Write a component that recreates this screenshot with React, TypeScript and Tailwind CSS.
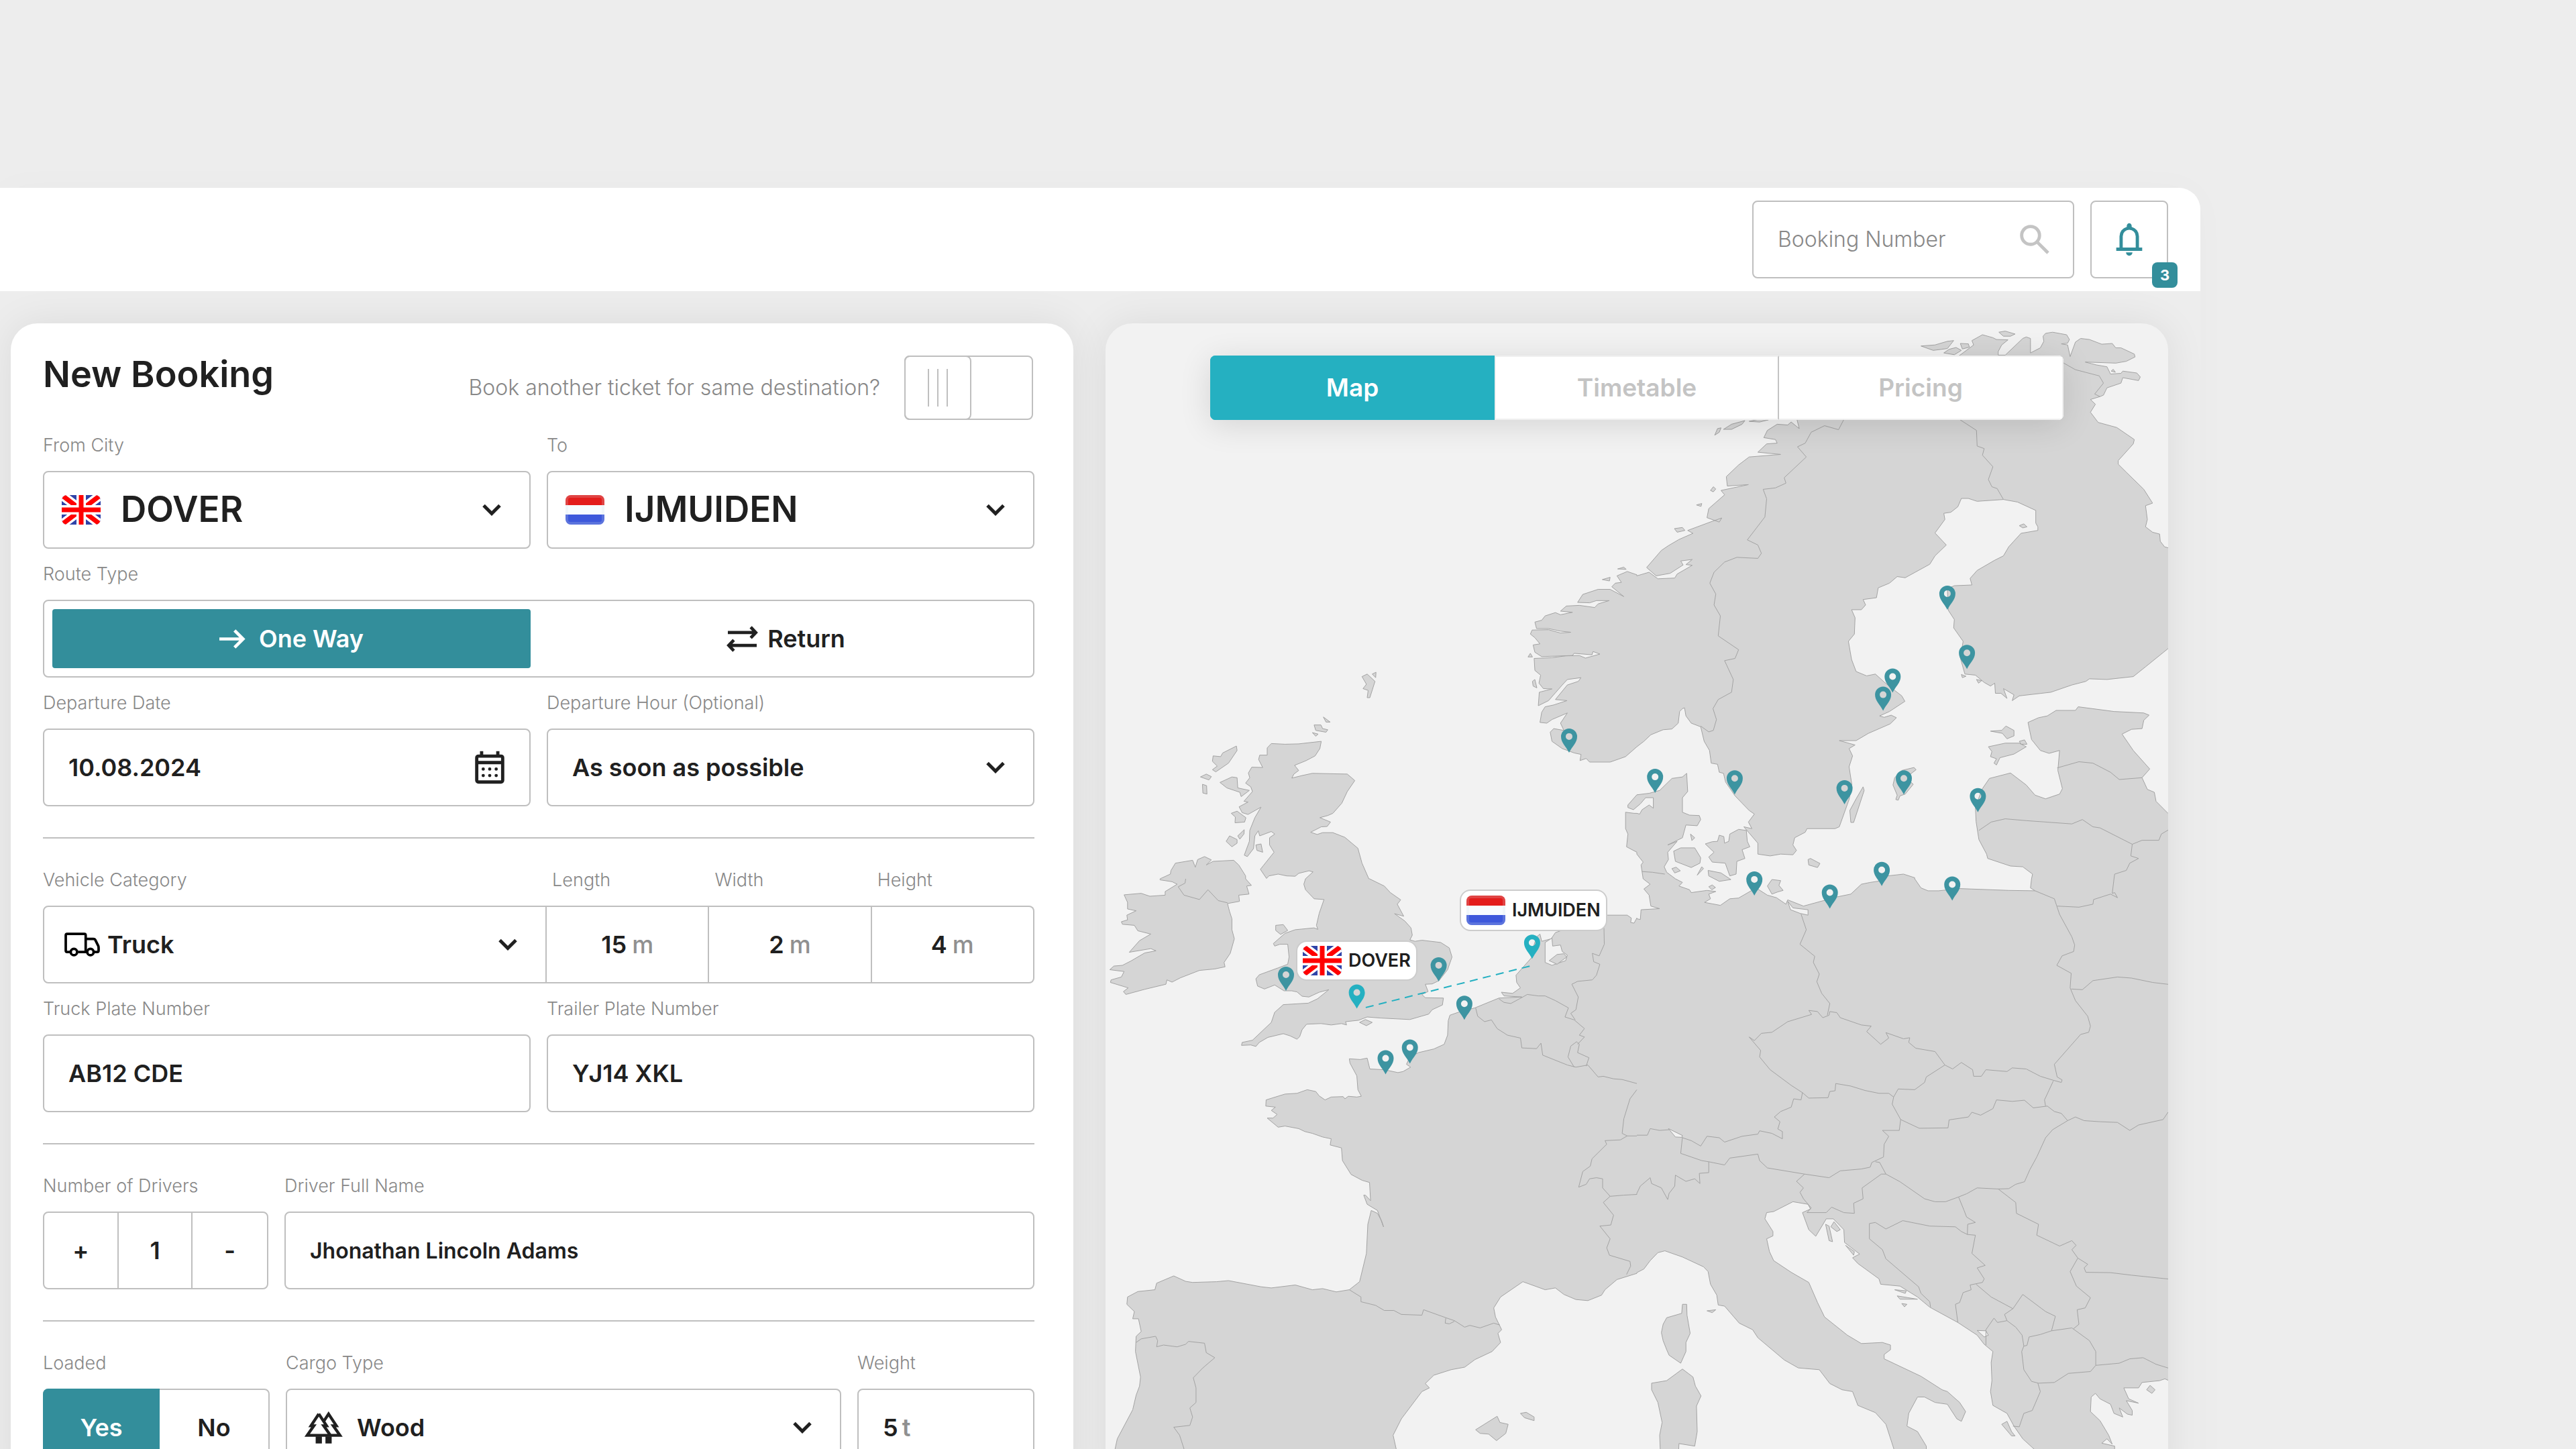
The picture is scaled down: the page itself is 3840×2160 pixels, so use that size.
import { useState } from 'react';
import type { ReactNode } from 'react';
import clsx from 'clsx';

type Quad = 'NW' | 'NE' | 'SW' | 'SE';
type Segment = [Quad, string];

// The coast lines are digitised in four sheets; each sheet has its own origin and scale.
const SHEETS: Record<Quad, { x: number; y: number; sx: number; sy: number }> = {
  NW: { x: -8, y: -22, sx: 0.5102, sy: 0.5421 },
  NE: { x: 792, y: -22, sx: 0.523, sy: 0.5421 },
  SW: { x: -8, y: 828, sx: 0.5102, sy: 0.5421 },
  SE: { x: 792, y: 828, sx: 0.523, sy: 0.5421 },
};

function project(quad: Quad, x: number, y: number) {
  const s = SHEETS[quad];
  return [s.x + x * s.sx, s.y + y * s.sy].map((n) => n.toFixed(1));
}

function toPath(segments: Segment[], close = false) {
  const points = segments.flatMap(([quad, list]) =>
    list.split(' ').map((pair) => {
      const [x, y] = pair.split(',').map(Number);
      return project(quad, x, y).join(' ');
    }),
  );
  return `M${points.join('L')}${close ? 'Z' : ''}`;
}

const LAND: Segment[][] = [
  // Great Britain
  [
    ['NW', '646,1190 642,1210 628,1230 602,1243 568,1256 580,1270 566,1280 560,1291 590,1284 620,1278 722,1280 744,1298 722,1328 706,1360 680,1388 665,1394 642,1400 673,1412 663,1424 646,1425 615,1440 634,1446 650,1441 680,1441 715,1454 753,1484 765,1525 785,1568'],
    ['SW', '787,0 830,20 848,38 878,58 868,70 887,103 860,96 890,116 908,135 912,155 905,168 920,172 940,169 995,175 1020,190 1028,215 1015,250 990,280 970,289 950,290 958,310 940,318 950,327 1003,328 1000,347 970,360 960,372 905,387 820,383 780,380 755,389 717,393 720,402 705,398 675,402 645,398 603,400 590,415 583,434 575,441 555,432 535,426 490,436 465,450 455,461 440,457 413,458 415,450 445,444 500,395 510,367 535,346 608,342 635,330 668,305 640,312 610,325 590,323 575,311 560,308 537,308 510,292 480,303 460,295 455,275 465,264 520,245 548,235 552,215 548,180 525,180 510,185 506,178 540,150 570,140 625,135 636,139 632,128 640,95 654,57 625,55 600,30 595,15 600,0'],
    ['NW', '600,1568 622,1549 610,1546 580,1553 570,1561 545,1560 520,1555 493,1560 486,1567 468,1542 508,1495 495,1475 495,1455 510,1445 500,1438 466,1450 462,1436 452,1450 448,1485 430,1507 421,1503 436,1465 437,1435 452,1400 470,1371 432,1391 415,1386 406,1370 432,1357 420,1355 445,1328 440,1315 425,1305 437,1290 433,1277 443,1261 475,1262 463,1240 466,1228 488,1228 488,1208 500,1196 540,1198 580,1197'],
  ],
  // Ireland
  [
    ['NW', '175,1568 205,1555 207,1545 220,1525 270,1517 278,1536 285,1515 305,1507 325,1516 310,1530 330,1520 390,1517 405,1530 425,1560'],
    ['SW', '425,0 442,18 428,20 435,42 405,45 407,62 372,68 378,90 385,110 385,140 392,165 380,205 362,230 365,242 335,248 290,252 235,272 210,284 195,278 192,290 130,304 75,318 68,310 82,300 30,285 32,278 62,270 70,255 28,250 40,240 65,238 90,226 130,204 163,198 148,192 85,202 115,170 148,152 110,143 100,128 65,125 62,118 80,113 78,100 105,88 80,83 80,65 70,44 120,40 145,48 190,45 190,35 225,15 210,8 175,3'],
  ],
  // Norway, Sweden, Finland
  [
    ['NE', '130,1100 122,1108 118,1140 100,1156 75,1158 40,1172 20,1190 0,1205'],
    ['NW', '1568,1205 1535,1232 1490,1247 1430,1247 1420,1237 1402,1243 1405,1226 1385,1222 1350,1210 1320,1190 1315,1165 1325,1155 1355,1160 1345,1140 1365,1112 1320,1130 1305,1140 1285,1138 1290,1110 1300,1095 1325,1090 1364,1078 1330,1075 1365,1035 1397,1025 1405,1015 1365,1020 1350,1035 1310,1078 1280,1092 1283,1055 1320,1046 1295,1045 1282,1030 1287,1008 1270,995 1268,962 1320,960 1360,955 1400,954 1418,961 1460,950 1440,943 1437,952 1385,948 1380,954 1290,957 1270,945 1265,925 1285,922 1270,905 1257,895 1262,884 1310,883 1345,892 1375,890 1345,887 1310,880 1275,880 1270,862 1290,857 1300,845 1330,836 1345,842 1380,835 1345,832 1362,818 1400,816 1445,822 1455,812 1487,803 1450,803 1430,809 1395,808 1410,786 1455,772 1490,772 1530,792 1495,765 1505,755 1523,753 1510,735 1540,723 1568,732'],
    ['NE', '0,735 35,725 60,743 108,741 115,730 158,706 140,704 158,690 125,694 132,705 95,728 55,735 28,712 70,665 90,652 120,635 160,618 145,610 215,585 242,576 235,587 200,575 205,550 250,512 240,500 318,484 258,488 255,462 290,430 320,408 410,401 345,395 370,372 400,370 395,360 362,355 372,335 400,318 430,320 440,312 463,330 455,300 700,180 890,150 935,118 960,100 955,88 985,72 1015,80 1025,85 1058,86 1040,100 1030,118 1030,128 1050,128 1100,82 1110,78 1122,82 1122,122 1150,108 1160,90 1158,76 1165,68 1185,65 1225,72 1233,85 1228,95 1210,97 1228,100 1235,132 1250,92 1265,82 1290,85 1325,98 1355,96 1365,108 1380,108 1418,125 1420,133 1395,145 1365,150 1278,147 1310,155 1340,160 1350,180 1380,178 1385,172 1425,177 1435,188 1430,198 1385,190 1380,205 1340,218 1330,238 1320,242 1293,250 1307,263 1293,285 1315,313 1368,327 1418,360 1415,372 1372,418 1372,428 1395,450 1445,497 1470,535 1450,542 1455,580 1450,600 1470,615 1490,620 1492,640 1504,655 1540,665 1540,920 1514,935 1450,985 1415,1012 1340,1020 1290,1018 1280,1025 1240,1035 1180,1055 1090,1065 1070,1078 1075,1062 1045,1045 1055,1072 1038,1058 1022,1058 1020,1030 1008,1038 990,1028 965,1008 935,1005 922,960 930,915 903,878 905,855 888,830 885,770 905,762 955,760 950,742 970,720 1020,692 1045,680 1060,655 1095,618 1143,610 1143,600 1137,590 1137,555 1085,532 1045,525 1000,528 970,530 945,522 925,522 915,545 895,560 875,563 878,580 850,617 882,650 850,680 835,703 765,740 742,737 720,755 688,768 683,795 645,800 652,815 640,828 612,828 622,850 620,895 603,915 612,965 625,998 655,1010 680,1005 705,1027 735,1050 755,1065 764,1080 720,1108 692,1120 705,1124 725,1118 740,1125 722,1142 660,1168 625,1188 577,1188 622,1200 605,1210 615,1230 605,1260 613,1310 605,1350 577,1425 565,1430 485,1430 480,1440 450,1455 445,1475 455,1490 445,1502 410,1500 380,1505 345,1500 345,1470 305,1425 328,1430 318,1412 335,1390 320,1380 280,1340 253,1302 247,1278 235,1275 230,1253 212,1250 207,1215 192,1190 182,1150 155,1140 140,1120 136,1098'],
  ],
  // Continental Europe
  [
    ['NE', '1540,1400 1514,1388 1480,1355 1475,1330 1455,1322 1440,1290 1462,1266 1415,1215 1383,1170 1410,1157 1440,1155 1445,1132 1460,1118 1445,1112 1360,1108 1258,1095 1250,1105 1195,1105 1170,1120 1145,1125 1115,1138 1125,1185 1150,1215 1175,1223 1205,1215 1200,1270 1213,1320 1205,1335 1165,1348 1135,1338 1110,1310 1065,1277 1005,1292 985,1320 965,1370 967,1410 975,1460 997,1500 1000,1512 1065,1533 1100,1535 1128,1555 1125,1568'],
    ['SE', '1125,0 1122,25 1135,33 1060,32 920,27 860,33 830,33 810,25 792,0'],
    ['NE', '792,1565 760,1555 715,1560'],
    ['SE', '700,5 665,10 640,15 610,42 570,50 475,75 430,58 425,70 398,52 372,45 340,25 290,53 265,55 238,73 193,65 210,55 205,42 225,35 200,32 155,38 150,30 120,20 130,10 110,0'],
    ['NE', '110,1568 85,1550 78,1535 90,1515 88,1495 115,1465 88,1475 130,1455 140,1420 172,1422 182,1405 178,1394 150,1393 130,1385 130,1345 145,1328 142,1278 130,1288 100,1292 65,1325 35,1333 0,1337'],
    ['NW', '1568,1337 1542,1365 1542,1372 1558,1378'],
    ['NE', '10,1362 25,1345 47,1345 47,1374 35,1365 15,1378 8,1390 0,1388'],
    ['NW', '1560,1388 1535,1385 1535,1430 1542,1445 1538,1480 1568,1495'],
    ['NE', '0,1500 18,1522 12,1530 18,1568'],
    ['SE', '18,0 38,15 20,28 35,45 40,75 65,82 12,85 10,112 0,110'],
    ['SW', '1568,108 1560,122 1550,120 1552,108 1540,100 1475,100 1400,125 1330,148 1318,165 1290,172 1285,152 1275,160 1265,190 1262,215 1215,265 1217,285 1228,300 1205,315 1172,312 1180,322 1232,325 1165,328 1095,355 1050,366 1022,375 1017,390 1015,430 1005,455 975,468 930,478 905,490 895,510 907,518 885,530 870,533 830,525 788,523 780,493 760,497 728,495 730,507 750,542 753,580 763,598 750,600 725,598 715,605 710,599 675,600 657,608 640,597 630,585 605,580 575,590 540,592 485,608 484,625 512,628 500,637 517,648 505,658 488,658 520,683 540,680 580,687 598,695 620,700 650,710 675,715 672,732 705,740 708,775 733,813 765,829 787,835 790,885 775,870 770,870 780,895 810,912 828,957 822,940 810,920 792,912 782,950 778,1030 758,1108 728,1130 690,1136 650,1127 620,1130 570,1117 500,1125 470,1122 375,1105 340,1108 270,1110 250,1107 215,1092 165,1112 160,1130 110,1135 80,1150 78,1170 100,1190 95,1210 112,1210 120,1245 105,1258 103,1300 118,1370 115,1395 105,1420 95,1460 50,1540 42,1575 42,1700 870,1700 865,1568 856,1530 880,1485 940,1410 962,1400 950,1388 975,1365 1025,1350 1065,1343 1095,1322 1145,1300 1170,1275 1162,1250 1173,1240 1155,1205 1150,1180 1170,1150 1235,1108 1300,1130 1330,1125 1355,1143 1390,1157 1425,1160 1465,1145 1475,1130 1510,1102 1568,1085'],
    ['SE', '0,1083 20,1073 38,1050 60,1028 80,1023 130,1040 190,1067 203,1080 210,1115 228,1145 232,1172 250,1175 292,1222 330,1240 345,1262 420,1323 460,1345 520,1350 550,1388 585,1405 615,1410 630,1448 680,1468 710,1500 735,1575 735,1700 826,1700 825,1560 800,1520 770,1505 775,1470 800,1425 820,1425 850,1440 885,1445 912,1485 925,1492 937,1465 920,1440 885,1410 870,1405 810,1368 705,1320 705,1308 723,1295 723,1282 700,1275 640,1278 600,1255 535,1205 515,1165 490,1110 440,1082 390,1050 378,1025 370,990 388,982 388,970 365,935 370,918 390,915 445,888 488,895 495,908 472,918 490,965 510,983 540,935 560,935 590,965 592,1000 635,1032 615,1042 630,1058 690,1100 695,1115 750,1120 800,1150 835,1178 915,1220 970,1255 990,1280 1015,1300 1010,1330 1012,1380 1008,1410 1015,1448 1055,1470 1075,1505 1100,1540 1140,1575 1140,1700 1360,1700 1362,1560 1325,1552 1340,1540 1355,1555 1345,1530 1320,1490 1293,1465 1295,1425 1307,1415 1320,1430 1350,1445 1360,1470 1385,1480 1375,1455 1398,1472 1412,1475 1412,1462 1395,1435 1430,1442 1402,1430 1388,1400 1430,1400 1440,1385 1490,1380 1505,1375 1540,1390 1540,0'],
  ],
  // Danish islands
  [['NE', '105,1492 125,1483 165,1483 182,1510 180,1525 155,1537 110,1520']],
  [['NE', '195,1472 215,1466 230,1465 235,1448 248,1452 250,1470 262,1465 265,1445 290,1432 312,1435 315,1465 322,1480 300,1488 308,1512 285,1520 283,1555 265,1560 252,1525 215,1522 205,1508 220,1495']],
  [['NE', '153,1445 165,1455 157,1463']],
  [['NE', '172,1558 185,1535 190,1540']],
  [['NE', '203,1545 240,1552 268,1570 235,1575 205,1560']],
  [['NE', '100,1540 112,1536 124,1546 108,1552']],
  [['SE', '205,22 215,17 224,24 214,30']],
  // Baltic islands
  [['SE', '372,20 385,2 410,5 405,18 417,32 402,36 385,42']],
  [['NE', '488,1515 495,1512 522,1526 515,1537 490,1530']],
  [['NE', '645,1315 648,1325 618,1413 610,1413 607,1380 625,1348']],
  [['NE', '755,1270 790,1262 796,1268 780,1280 778,1300 788,1308 765,1335 750,1340 745,1352 738,1350 742,1338 730,1310 735,1290']],
  [['NE', '1008,1162 1040,1160 1052,1148 1075,1160 1075,1175 1055,1183 1042,1168']],
  [['NE', '1002,1205 1050,1195 1090,1195 1110,1205 1075,1225 1035,1235 1025,1255 1018,1250 1025,1238 1008,1232 1012,1218']],
  [['NE', '1090,1190 1105,1186 1112,1198 1095,1198']],
  [['NE', '925,1006 938,1011 928,1015']],
  [['NE', '968,1020 983,1023 974,1030']],
  [['NE', '1090,597 1103,592 1112,600 1100,603']],
  // Norwegian islands
  [['NE', '222,348 230,330 240,328 235,340']],
  [['NE', '247,332 270,318 308,308 300,318 270,332']],
  [['NE', '320,310 345,305 375,306 350,312']],
  [['NE', '810,103 850,100 885,90 903,88 885,110 845,115']],
  [['NE', '875,122 890,112 910,107 925,115 905,127']],
  [['NE', '922,96 945,97 948,106 928,111']],
  [['NE', '1032,65 1050,62 1078,70 1065,76 1045,76']],
  [['NE', '210,500 218,490 225,496 218,504']],
  [['NE', '170,540 185,536 183,544']],
  [['NE', '107,605 130,602 137,610 115,615']],
  [['NE', '1352,172 1358,167 1364,175']],
  [['NW', '1512,716 1530,711 1537,717']],
  [['NW', '1467,745 1490,739 1488,749']],
  [['NW', '1250,958 1257,948 1263,958']],
  [['NW', '1263,1025 1270,1020 1276,1043 1265,1038']],
  // Scottish islands, Anglesey, Wight
  [['NW', '765,1012 780,1005 803,1025 788,1070 780,1070 783,1050 768,1045 778,1033']],
  [['NW', '795,1005 806,1000 805,1015']],
  [['NW', '625,1145 645,1145 650,1155 665,1158 660,1165 630,1160']],
  [['NW', '652,1123 672,1137 660,1137']],
  [['NW', '620,1166 637,1170 630,1176']],
  [['NW', '398,1203 400,1215 375,1250 338,1274 328,1268 342,1258 328,1245 330,1230 352,1232 358,1222']],
  [['NW', '293,1288 310,1280 325,1287 318,1296']],
  [['NW', '299,1308 311,1312 312,1335 300,1332']],
  [['NW', '350,1303 385,1288 400,1290 402,1318 436,1325 412,1342 408,1330 370,1318']],
  [['NW', '383,1388 400,1382 426,1400 422,1412 394,1414 395,1398']],
  [['NW', '368,1465 378,1450 400,1460 400,1470 385,1480']],
  [['NW', '402,1450 421,1433 420,1445 408,1459']],
  [['NW', '455,1475 470,1472 475,1495 458,1490']],
  [['SW', '513,128 535,126 548,142 527,153 513,142']],
  [['SW', '758,395 775,387 795,395 778,404']],
  // Mediterranean islands
  [['SW', '1097,1515 1160,1478 1168,1495 1192,1500 1185,1525 1158,1545 1135,1527 1110,1525']],
  [['SW', '1228,1470 1245,1467 1268,1480 1268,1490 1240,1482']],
  [['SE', '128,1195 130,1170 142,1170 143,1200 152,1250 140,1275 140,1300 125,1332 92,1310 85,1295 75,1270 70,1248 75,1225 85,1207']],
  [['SE', '42,1387 85,1380 130,1348 160,1370 167,1395 183,1422 170,1450 172,1520 165,1560 120,1553 118,1600 68,1600 65,1530 72,1495 60,1440 42,1405']],
  [['SE', '200,1188 225,1185 215,1193']],
  [['SE', '538,950 548,955 558,998 548,995']],
  [['SE', '553,957 562,943 580,965 570,970']],
  [['SE', '595,1008 620,1025 618,1035']],
  [['SE', '735,1130 768,1133 765,1140']],
  [['SE', '742,1147 800,1156 750,1156']],
  [['SE', '755,1168 770,1170 763,1177']],
  [['SE', '1040,1500 1055,1492 1068,1520 1078,1532 1068,1532']],
  [['SE', '1453,1405 1463,1393 1477,1405 1468,1415']],
];

const WATER: Segment[][] = [
  [['SE', '430,62 445,80 488,85 488,100 465,95 438,85']],
  [['SW', '1300,175 1320,163 1322,185 1345,182 1350,200 1365,210 1360,225 1320,238 1300,230']],
  [['SE', '90,687 130,706 128,711 110,710']],
  [['SE', '970,1242 995,1243 1002,1255 990,1260']],
];

const POLDERS: Segment[][] = [[['SW', '1312,225 1335,208 1355,206 1363,215 1335,235']]];

const BORDERS: Segment[][] = [
  [['SW', '250,0 248,12 228,22 245,45 290,57 315,30 345,60 372,66']],
  [['NE', '182,1148 205,1164 218,1160 227,1130 217,1100 232,1075 270,1055 275,1020 250,968 280,962 290,938 232,900 238,845 220,815 225,785 208,755 220,725 250,697 285,684 345,687 355,673 345,650 315,636 365,573 370,523 360,497 395,493 425,480 420,465 483,408 458,380 480,370 497,340 535,322 575,333 590,305']],
  [['NE', '920,305 968,335 970,378 990,385 985,403 1015,435 1002,470 1012,490 1027,495 1045,525']],
  [['NE', '1200,140 1217,150 1250,168 1318,185 1330,205 1305,235 1320,242']],
  [['NE', '15,1548 45,1550 80,1555']],
  [['SW', '728,1130 762,1150 762,1163 805,1173 830,1187 858,1187 880,1198 940,1200 945,1185 1010,1207 1035,1215 1065,1233 1080,1228 1110,1235 1150,1222 1168,1227']],
  [['SW', '1010,1207 1008,1222 1020,1224 1035,1217']],
  [['SW', '105,1275 120,1265 162,1258 168,1270 165,1287 185,1282 225,1287 250,1280 258,1272 305,1277 310,1303 335,1317 300,1345 272,1372 280,1400 280,1440 262,1455 270,1480 262,1503 215,1508 232,1530 245,1568']],
  [['SW', '1097,355 1103,378 1123,393 1143,388 1160,412 1190,430 1228,438 1232,465 1275,467 1288,452 1293,485 1365,512 1390,518 1425,512 1455,545 1470,543 1500,550 1525,552 1568,563']],
  [['SW', '1568,580 1548,605 1530,660 1525,700 1540,707']],
  [['SW', '1385,518 1367,490 1375,460 1392,448 1400,455 1395,478 1428,492 1420,515']],
  [['SW', '1165,330 1180,340 1200,343 1235,325 1248,318 1280,322 1300,322 1330,335 1368,355 1358,380 1385,388 1415,412 1400,430 1415,435 1395,455']],
  [['SW', '1472,135 1473,180 1458,212 1438,205 1442,228 1460,235 1450,265 1438,278 1395,282 1378,290 1397,325 1390,360 1375,370 1388,388']],
  [['SW', '1568,707 1540,707 1520,718 1475,720 1480,730 1437,770 1432,790 1410,805 1398,848 1420,840 1430,825 1450,822 1468,825 1468,850 1490,873 1470,890 1500,925 1492,952 1460,955 1490,990 1480,1015 1488,1035 1548,1052 1550,1065 1538,1088']],
  [['SW', '1490,873 1530,870 1568,868'], ['SE', '0,865 10,845 38,822 42,838 70,850 88,882 92,865 108,845 110,815 140,832 165,825 180,838 178,810 205,808 205,778 185,775 125,755 130,710']],
  [['SE', '0,705 30,705 38,687 65,692 92,690']],
  [['SE', '130,712 155,720 182,735 200,708 235,712 250,724 300,708 345,702 350,693 385,700 415,715 415,695 402,688 408,668 392,655 410,640 440,628 447,605 468,608 472,588']],
  [['SE', '205,778 250,787 265,768 345,757 350,775 372,795 478,812 548,822 580,803 640,798 665,793 670,780 703,765 705,730 718,708 700,692 748,692 752,662']],
  [['SE', '472,588 440,568 380,525 350,490 353,472 320,435 335,445 355,425 385,422 430,393 498,373 490,362 515,365 530,382 548,375 550,365 570,368 580,382 640,402 668,405 655,420 695,455 718,438 710,423 760,440 778,437 775,450 795,466 850,475 878,512 825,545 820,560 792,580 745,578 732,600']],
  [['SE', '472,588 490,603 545,602 550,585 565,583 567,563 610,570 650,582 690,590 718,590 732,600 728,620 752,662']],
  [['SE', '468,97 483,140 465,180 507,213 503,230 520,262 513,283 527,315 550,343 543,375']],
  [['SE', '878,512 900,523 925,505 957,525 960,543 982,543 995,525 1055,530 1070,520 1110,523 1150,543 1187,554 1210,560']],
  [['SE', '1210,560 1212,553 1198,545 1190,510 1265,428 1288,422 1293,405 1285,378 1250,335 1235,300 1238,260 1197,238 1212,212 1245,200 1248,182 1240,160 1205,98 1190,55 1135,33']],
  [['SE', '1198,75 1260,78 1300,70 1302,57 1350,42 1370,52 1362,38 1355,40 1360,0'], ['NE', '1360,1568 1362,1555 1395,1545 1405,1525 1430,1512 1408,1505 1412,1473']],
  [['NE', '975,1435 1010,1412 1050,1403 1110,1408 1240,1417 1270,1405 1300,1425 1320,1428 1412,1473 1440,1462 1488,1462 1495,1445 1530,1425']],
  [['NE', '1198,1263 1260,1246 1300,1250 1350,1275 1375,1295 1440,1290']],
  [['SE', '1238,303 1270,305 1300,280 1370,270 1410,273 1470,285 1530,292']],
  [['SE', '1187,556 1162,608 1165,625']],
  [['SE', '752,662 805,686 887,685 890,663 945,655 955,642 980,650 1015,632 1025,608 1070,612 1105,609 1130,630 1170,625 1190,640 1210,645 1228,665 1250,655 1275,665 1320,668 1370,670 1405,692 1430,677 1500,662 1514,642 1530,640']],
  [['SE', '1228,665 1185,690 1165,712 1140,765 1120,800 1105,833 1080,840 1060,852 1030,853 970,850 940,866 917,875 880,888 850,888 820,880 750,833 710,812 692,780 680,778']],
  [['SE', '478,812 455,832 475,850 465,862 475,880 497,905 485,918 540,918 555,903 590,918 620,920 618,892 645,880 642,850 697,812 710,812']],
  [['SE', '917,875 932,910 940,930 965,945 943,950 942,978 965,980 955,1030 993,1063 970,1070 990,1100 985,1110 950,1117 953,1130 930,1138 920,1165 908,1170 915,1220']],
  [['SE', '942,978 925,970 908,957 835,955 758,940 710,963 680,945 663,948 663,990 700,1020 710,1045 803,1122 810,1140 835,1163 837,1178']],
  [['SE', '1030,853 1080,890 1082,920 1145,950 1140,980 1205,1010 1240,995 1252,1008 1240,1020 1257,1043 1285,1060 1275,1070 1280,1082 1350,1083 1410,1090 1530,1102']],
  [['SE', '1257,1043 1235,1080 1253,1120 1293,1152 1278,1180 1255,1185 1260,1225 1245,1237']],
  [['SE', '967,1115 1010,1150 1072,1182 1100,1143 1165,1190 1193,1203 1182,1243']],
  [['SE', '1072,1182 1048,1198 1055,1215 1028,1220 1018,1208 995,1240 995,1282']],
  [['SE', '1055,1215 1080,1233 1098,1255 1103,1285 1112,1283 1118,1260 1150,1253 1182,1243 1240,1235 1290,1270 1308,1300 1308,1338 1293,1355 1230,1360 1190,1385 1145,1387 1125,1382 1103,1350 1097,1300 1103,1285']],
  [['SE', '1143,1387 1150,1410 1127,1462 1103,1470 1090,1507 1072,1505']],
  [['SE', '1308,1338 1375,1332 1405,1320 1443,1317 1480,1335 1530,1350']],
];

const PINS: { at: [Quad, number, number]; active?: boolean }[] = [
  { at: ['NW', 1370, 1221] },
  { at: ['NE', 885, 828] },
  { at: ['NE', 941, 991] },
  { at: ['NE', 729, 1056] },
  { at: ['NE', 702, 1106] },
  { at: ['NE', 52, 1332] },
  { at: ['NE', 279, 1336] },
  { at: ['NE', 592, 1363] },
  { at: ['NE', 761, 1336] },
  { at: ['NE', 972, 1385] },
  { at: ['SE', 335, 46] },
  { at: ['SE', 550, 82] },
  { at: ['SE', 698, 20] },
  { at: ['SE', 899, 60] },
  { at: ['SW', 543, 308] },
  { at: ['SW', 989, 282] },
  { at: ['SW', 1064, 388] },
  { at: ['SW', 905, 508] },
  { at: ['SW', 834, 538] },
  { at: ['SW', 750, 357], active: true },
  { at: ['SW', 1262, 220], active: true },
];

function EuropeMap() {
  return (
    <svg className="absolute inset-0 h-full w-full" viewBox="0 0 1584 1760" preserveAspectRatio="xMinYMin slice" aria-hidden="true">
      <g stroke="#a3a3a3" strokeWidth="1" strokeLinejoin="round">
        <path d={LAND.map((s) => toPath(s, true)).join('')} fill="#d5d5d5" />
        <path d={WATER.map((s) => toPath(s, true)).join('')} fill="#f2f2f2" />
        <path d={POLDERS.map((s) => toPath(s, true)).join('')} fill="#d5d5d5" />
        <path d={BORDERS.map((s) => toPath(s)).join('')} fill="none" />
      </g>
      <path d={toPath([['SW', '776,354 1264,238']])} stroke="#25b0c1" strokeWidth="2" strokeDasharray="12 8" />
      {PINS.map(({ at, active }) => (
        <path
          key={at.join()}
          transform={`translate(${project(...at).join(' ')})`}
          d="M0 0C-5-10-12-15-12-24a12 12 0 0 1 24 0C12-15 5-10 0 0Zm0-19a5 5 0 1 0 0-10 5 5 0 0 0 0 10Z"
          fill={active ? '#25b0c1' : '#3d94a1'}
          fillRule="evenodd"
        />
      ))}
    </svg>
  );
}

function FlagUK({ className }: { className?: string }) {
  return (
    <svg viewBox="0 0 58 44" className={clsx('h-11 w-[58px] rounded-lg', className)} aria-hidden="true">
      <path d="M0 0h58v44H0z" fill="#2f43a8" />
      <path d="M0 0l58 44M58 0L0 44" stroke="#fff" strokeWidth="14" />
      <path d="M0 0l58 44M58 0L0 44" stroke="#f00" strokeWidth="7" />
      <path d="M29 0v44M0 22h58" stroke="#fff" strokeWidth="14" />
      <path d="M29 0v44M0 22h58" stroke="#f00" strokeWidth="7" />
    </svg>
  );
}

function FlagNL({ className }: { className?: string }) {
  return (
    <svg viewBox="0 0 58 44" className={clsx('h-11 w-[58px] rounded-lg', className)} aria-hidden="true">
      <path d="M0 0h58v15H0z" fill="#e31d1c" />
      <path d="M0 15h58v14H0z" fill="#f7fcff" />
      <path d="M0 29h58v15H0z" fill="#3d58db" />
      <rect x="2" y="2" width="54" height="40" rx="5" fill="none" stroke="#d8e0e6" strokeOpacity=".2" strokeWidth="4" />
    </svg>
  );
}

function Symbol({ d, className }: { d: string; className?: string }) {
  return (
    <svg viewBox="0 -960 960 960" fill="currentColor" className={clsx('size-[58px]', className)} aria-hidden="true">
      <path d={d} />
    </svg>
  );
}

const SEARCH =
  'M784-120 532-372q-30 24-69 38t-83 14q-109 0-184.5-75.5T120-580q0-109 75.5-184.5T380-840q109 0 184.5 75.5T640-580q0 44-14 83t-38 69l252 252-56 56ZM380-400q75 0 127.5-52.5T560-580q0-75-52.5-127.5T380-760q-75 0-127.5 52.5T200-580q0 75 52.5 127.5T380-400Z';
const BELL =
  'M160-200v-80h80v-280q0-83 50-147.5T420-792v-28q0-25 17.5-42.5T480-880q25 0 42.5 17.5T540-820v28q80 20 130 84.5T720-560v280h80v80H160ZM480-80q-33 0-56.5-23.5T400-160h160q0 33-23.5 56.5T480-80ZM320-280h320v-280q0-66-47-113t-113-47q-66 0-113 47t-47 113v280Z';
const CALENDAR =
  'M200-80q-33 0-56.5-23.5T120-160v-560q0-33 23.5-56.5T200-800h40v-80h80v80h320v-80h80v80h40q33 0 56.5 23.5T840-720v560q0 33-23.5 56.5T760-80H200Zm0-80h560v-400H200v400Zm0-480h560v-80H200v80ZM440-440a40 40 0 1 0 80 0 40 40 0 1 0-80 0ZM280-440a40 40 0 1 0 80 0 40 40 0 1 0-80 0ZM600-440a40 40 0 1 0 80 0 40 40 0 1 0-80 0ZM440-280a40 40 0 1 0 80 0 40 40 0 1 0-80 0ZM280-280a40 40 0 1 0 80 0 40 40 0 1 0-80 0ZM600-280a40 40 0 1 0 80 0 40 40 0 1 0-80 0Z';

function Chevron({ className }: { className?: string }) {
  return (
    <svg viewBox="0 0 28 18" className={clsx('pointer-events-none absolute top-1/2 h-[18px] w-7 -translate-y-1/2', className)} aria-hidden="true">
      <path d="M2 2.5 14 14.5 26 2.5" fill="none" stroke="#202020" strokeWidth="5" />
    </svg>
  );
}

function ArrowRight() {
  return (
    <svg viewBox="0 0 117 86" className="h-[29px] w-[39px]" fill="none" stroke="currentColor" strokeWidth="14" aria-hidden="true">
      <path d="M0 43h102M68 5l38 38-38 38" />
    </svg>
  );
}

function ArrowsBoth() {
  return (
    <svg viewBox="0 0 142 116" className="h-[39px] w-[47px]" fill="none" stroke="currentColor" strokeWidth="14" aria-hidden="true">
      <path d="M6 29h122M109 5l23 24-23 24M136 87H14M33 63 10 87l23 24" />
    </svg>
  );
}

function TruckIcon() {
  return (
    <svg viewBox="0 0 157 106" className="h-9 w-[53px]" fill="none" stroke="#000" strokeWidth="11" aria-hidden="true">
      <path d="M24 86H12q-6 0-6-6V12q0-6 6-6h76q6 0 6 6v74M94 28h34q6 0 8 4l13 26q2 4 2 8v14q0 6-6 6h-12M60 86h38" />
      <circle cx="42" cy="86" r="14" />
      <circle cx="115" cy="86" r="14" />
    </svg>
  );
}

function TreesIcon() {
  return (
    <svg viewBox="0 0 172 144" className="h-12 w-[57px]" fill="none" stroke="#202020" strokeWidth="13" aria-hidden="true">
      <path d="M64 11 29 64h13L12 107h147l-30-43h14L108 11 87 43M64 11l35 53H86l30 43" />
      <path d="M50 112h28v32H50zM94 112h28v32H94z" fill="#202020" stroke="none" />
    </svg>
  );
}

const box = 'h-[116px] w-full rounded-lg border-2 border-[#bfbfbf] bg-white outline-none';
const value = 'text-[36px] font-semibold text-[#202020]';

function Field({ label, htmlFor, children, className, inset }: { label: string; htmlFor: string; children: ReactNode; className?: string; inset?: boolean }) {
  return (
    <div className={clsx('flex min-w-0 flex-col gap-[18px]', className)}>
      <label htmlFor={htmlFor} className={clsx('h-10 text-[27px] leading-10 font-light whitespace-nowrap text-[#888888]', inset && 'pl-2')}>
        {label}
      </label>
      {children}
    </div>
  );
}

function CitySelect({ id, city, flag }: { id: string; city: string; flag: ReactNode }) {
  return (
    <div className="relative">
      <div className="pointer-events-none absolute inset-y-0 left-7 flex items-center">{flag}</div>
      <select id={id} className={clsx(box, 'appearance-none pl-[114px] text-[53px] font-semibold text-[#202020]')}>
        <option>{city}</option>
      </select>
      <Chevron className="right-11" />
    </div>
  );
}

function Dimension({ id, label, size, last }: { id: string; label: string; size: string; last?: boolean }) {
  return (
    <Field label={label} htmlFor={id} inset>
      <div className={clsx('flex h-[116px] items-center justify-center gap-2 border-2 border-l-0 border-[#bfbfbf]', last && 'rounded-r-lg')}>
        <input id={id} defaultValue={size} className={clsx(value, 'field-sizing-content outline-none')} />
        <span className="text-[36px] font-medium text-[#909090]">m</span>
      </div>
    </Field>
  );
}

function Divider() {
  return <hr className="mt-7 mb-6 border-t-2 border-[#bfbfbf]" />;
}

function BookingForm() {
  return (
    <form className="flex flex-col gap-[18px] rounded-[40px] bg-white pt-12 pr-[58px] pb-12 pl-12 shadow-[0_0_60px_rgba(0,0,0,0.08)]">
      <div className="flex h-24 items-center">
        <h1 className="mb-10 text-[54px] leading-[64px] font-semibold text-[#202020]">New Booking</h1>
        <label htmlFor="again" className="ml-auto text-[32px] font-light text-[#888888]">
          Book another ticket for same destination?
        </label>
        <div className="relative mr-0.5 ml-9 h-24 w-48">
          <input id="again" type="checkbox" className="peer h-full w-full appearance-none rounded-lg border-2 border-[#bfbfbf]" />
          <div className="pointer-events-none absolute inset-y-0 left-0 flex w-[100px] items-center justify-center gap-3 rounded-lg border-2 border-[#bfbfbf] peer-checked:right-0 peer-checked:left-auto">
            <i className="h-14 w-[2px] bg-[#bfbfbf]" />
            <i className="h-14 w-[2px] bg-[#bfbfbf]" />
            <i className="h-14 w-[2px] bg-[#bfbfbf]" />
          </div>
        </div>
      </div>

      <div className="grid grid-cols-2 gap-6">
        <Field label="From City" htmlFor="from">
          <CitySelect id="from" city="DOVER" flag={<FlagUK />} />
        </Field>
        <Field label="To" htmlFor="to">
          <CitySelect id="to" city="IJMUIDEN" flag={<FlagNL />} />
        </Field>
      </div>

      <Field label="Route Type" htmlFor="one-way">
        <div className={clsx(box, 'grid grid-cols-2 gap-6 p-3')}>
          <label className={clsx(value, 'flex items-center justify-center gap-5 rounded-sm has-checked:bg-[#338e9b] has-checked:text-white')}>
            <input id="one-way" type="radio" name="route" defaultChecked className="sr-only" />
            <ArrowRight />
            One Way
          </label>
          <label className={clsx(value, 'flex items-center justify-center gap-3.5 rounded-sm has-checked:bg-[#338e9b] has-checked:text-white')}>
            <input type="radio" name="route" className="sr-only" />
            <ArrowsBoth />
            Return
          </label>
        </div>
      </Field>

      <div className="grid grid-cols-2 gap-6">
        <Field label="Departure Date" htmlFor="date">
          <div className="relative">
            <input id="date" defaultValue="10.08.2024" className={clsx(box, value, 'px-9')} />
            <Symbol d={CALENDAR} className="pointer-events-none absolute top-1/2 right-8 -translate-y-1/2 text-[#202020]" />
          </div>
        </Field>
        <Field label="Departure Hour (Optional)" htmlFor="hour">
          <div className="relative">
            <select id="hour" className={clsx(box, value, 'appearance-none px-9')}>
              <option>As soon as possible</option>
            </select>
            <Chevron className="right-11" />
          </div>
        </Field>
      </div>

      <Divider />

      <div className="grid grid-cols-[31fr_10fr_10fr_10fr]">
        <Field label="Vehicle Category" htmlFor="vehicle">
          <div className="relative">
            <div className="pointer-events-none absolute inset-y-0 left-8 flex items-center">
              <TruckIcon />
            </div>
            <select id="vehicle" className={clsx(box, value, 'appearance-none rounded-r-none pl-[94px]')}>
              <option>Truck</option>
            </select>
            <Chevron className="right-11" />
          </div>
        </Field>
        <Dimension id="length" label="Length" size="15" />
        <Dimension id="width" label="Width" size="2" />
        <Dimension id="height" label="Height" size="4" last />
      </div>

      <div className="grid grid-cols-2 gap-6">
        <Field label="Truck Plate Number" htmlFor="truck-plate">
          <input id="truck-plate" defaultValue="AB12 CDE" className={clsx(box, value, 'px-9')} />
        </Field>
        <Field label="Trailer Plate Number" htmlFor="trailer-plate">
          <input id="trailer-plate" defaultValue="YJ14 XKL" className={clsx(box, value, 'px-9')} />
        </Field>
      </div>

      <Divider />

      <div className="flex gap-6">
        <Field label="Number of Drivers" htmlFor="drivers" className="w-[336px]">
          <div className={clsx(box, 'grid grid-cols-3 divide-x-2 divide-[#bfbfbf]')}>
            <button type="button" className={value}>+</button>
            <input id="drivers" defaultValue="1" className={clsx(value, 'min-w-0 text-center outline-none')} />
            <button type="button" className={value}>-</button>
          </div>
        </Field>
        <Field label="Driver Full Name" htmlFor="driver" className="flex-1">
          <input id="driver" defaultValue="Jhonathan Lincoln Adams" className={clsx(box, 'px-9 text-[32px] font-semibold text-[#202020]')} />
        </Field>
      </div>

      <Divider />

      <div className="flex gap-6">
        <Field label="Loaded" htmlFor="loaded-yes" className="w-[338px]">
          <div className={clsx(box, 'flex')}>
            <label className={clsx(value, '-my-0.5 -ml-0.5 flex w-[174px] items-center justify-center rounded-l-lg has-checked:bg-[#338e9b] has-checked:text-white')}>
              <input id="loaded-yes" type="radio" name="loaded" defaultChecked className="sr-only" />
              Yes
            </label>
            <label className={clsx(value, 'flex flex-1 items-center justify-center has-checked:bg-[#338e9b] has-checked:text-white')}>
              <input type="radio" name="loaded" className="sr-only" />
              No
            </label>
          </div>
        </Field>
        <Field label="Cargo Type" htmlFor="cargo" className="flex-1">
          <div className="relative">
            <div className="pointer-events-none absolute inset-y-0 left-7 flex items-center">
              <TreesIcon />
            </div>
            <select id="cargo" className={clsx(box, value, 'appearance-none pl-[104px]')}>
              <option>Wood</option>
            </select>
            <Chevron className="right-11" />
          </div>
        </Field>
        <Field label="Weight" htmlFor="weight" className="w-[264px]">
          <div className={clsx(box, 'flex items-center gap-1.5 px-9')}>
            <input id="weight" defaultValue="5" className={clsx(value, 'field-sizing-content outline-none')} />
            <span className="text-[36px] font-semibold text-[#909090]">t</span>
          </div>
        </Field>
      </div>
    </form>
  );
}

const TABS = ['Map', 'Timetable', 'Pricing'];

function MapPanel() {
  const [tab, setTab] = useState('Map');

  return (
    <section className="relative rounded-[40px] bg-[#f2f2f2] shadow-[0_0_60px_rgba(0,0,0,0.08)]">
      <div className="absolute inset-0 overflow-hidden rounded-[40px]">
        <EuropeMap />
        {/* City labels sit over their pins */}
        <div className="absolute top-[920px] left-[284px] flex h-[60px] items-center gap-2.5 rounded-2xl border-2 border-[#ccc] bg-white px-2 text-[27px] font-semibold text-[#202020]">
          <FlagUK />
          DOVER
        </div>
        <div className="absolute top-[844px] left-[528px] flex h-[62px] items-center gap-2.5 rounded-2xl border-2 border-[#ccc] bg-white px-2 text-[27px] font-semibold text-[#202020]">
          <FlagNL />
          IJMUIDEN
        </div>
      </div>
      <div className="relative mx-auto mt-12 grid h-24 w-[1272px] max-w-full grid-cols-3 overflow-hidden rounded-lg bg-white shadow-[0_8px_48px_rgba(0,0,0,0.12)]">
        {TABS.map((name, i) => (
          <button
            key={name}
            type="button"
            onClick={() => setTab(name)}
            className={clsx(
              'border-2 text-[37px] font-semibold',
              name === tab ? 'border-[#25b0c1] bg-[#25b0c1] text-white' : 'border-[#f0f0f0] bg-white text-[#c4c4c4]',
              i === 1 && 'border-r-[#c4c4c4]',
              i === 2 && 'border-l-0',
            )}
          >
            {name}
          </button>
        ))}
      </div>
    </section>
  );
}

function Header() {
  return (
    <header className="flex justify-end gap-6 rounded-tr-[32px] bg-white py-[19px] pr-12">
      <label className="flex h-[116px] w-[480px] items-center rounded-lg border-2 border-[#bfbfbf] pr-7 pl-9">
        <input
          type="search"
          aria-label="Booking Number"
          placeholder="Booking Number"
          className="min-w-0 flex-1 text-[32px] font-light outline-none placeholder:text-[#888888]"
        />
        <Symbol d={SEARCH} className="text-[#c4c4c4]" />
      </label>
      <button type="button" aria-label="Notifications" className="relative flex size-[116px] items-center justify-center rounded-lg border-2 border-[#bfbfbf] text-[#338e9b]">
        <Symbol d={BELL} />
        <span className="absolute -right-4 -bottom-4 flex size-[38px] items-center justify-center rounded-lg bg-[#338e9b] text-[22px] font-bold text-white">3</span>
      </button>
    </header>
  );
}

export default function App() {
  return (
    <div className="h-screen overflow-hidden bg-[#ededed] pt-[280px] pr-[560px] font-[Inter,'Noto_Sans',sans-serif]">
      <div className="rounded-tr-[32px] shadow-[0_0_60px_rgba(0,0,0,0.02)]">
        <Header />
        <main className="grid grid-cols-2 gap-12 pt-12 pr-12 pb-12 pl-4">
          <BookingForm />
          <MapPanel />
        </main>
      </div>
    </div>
  );
}
